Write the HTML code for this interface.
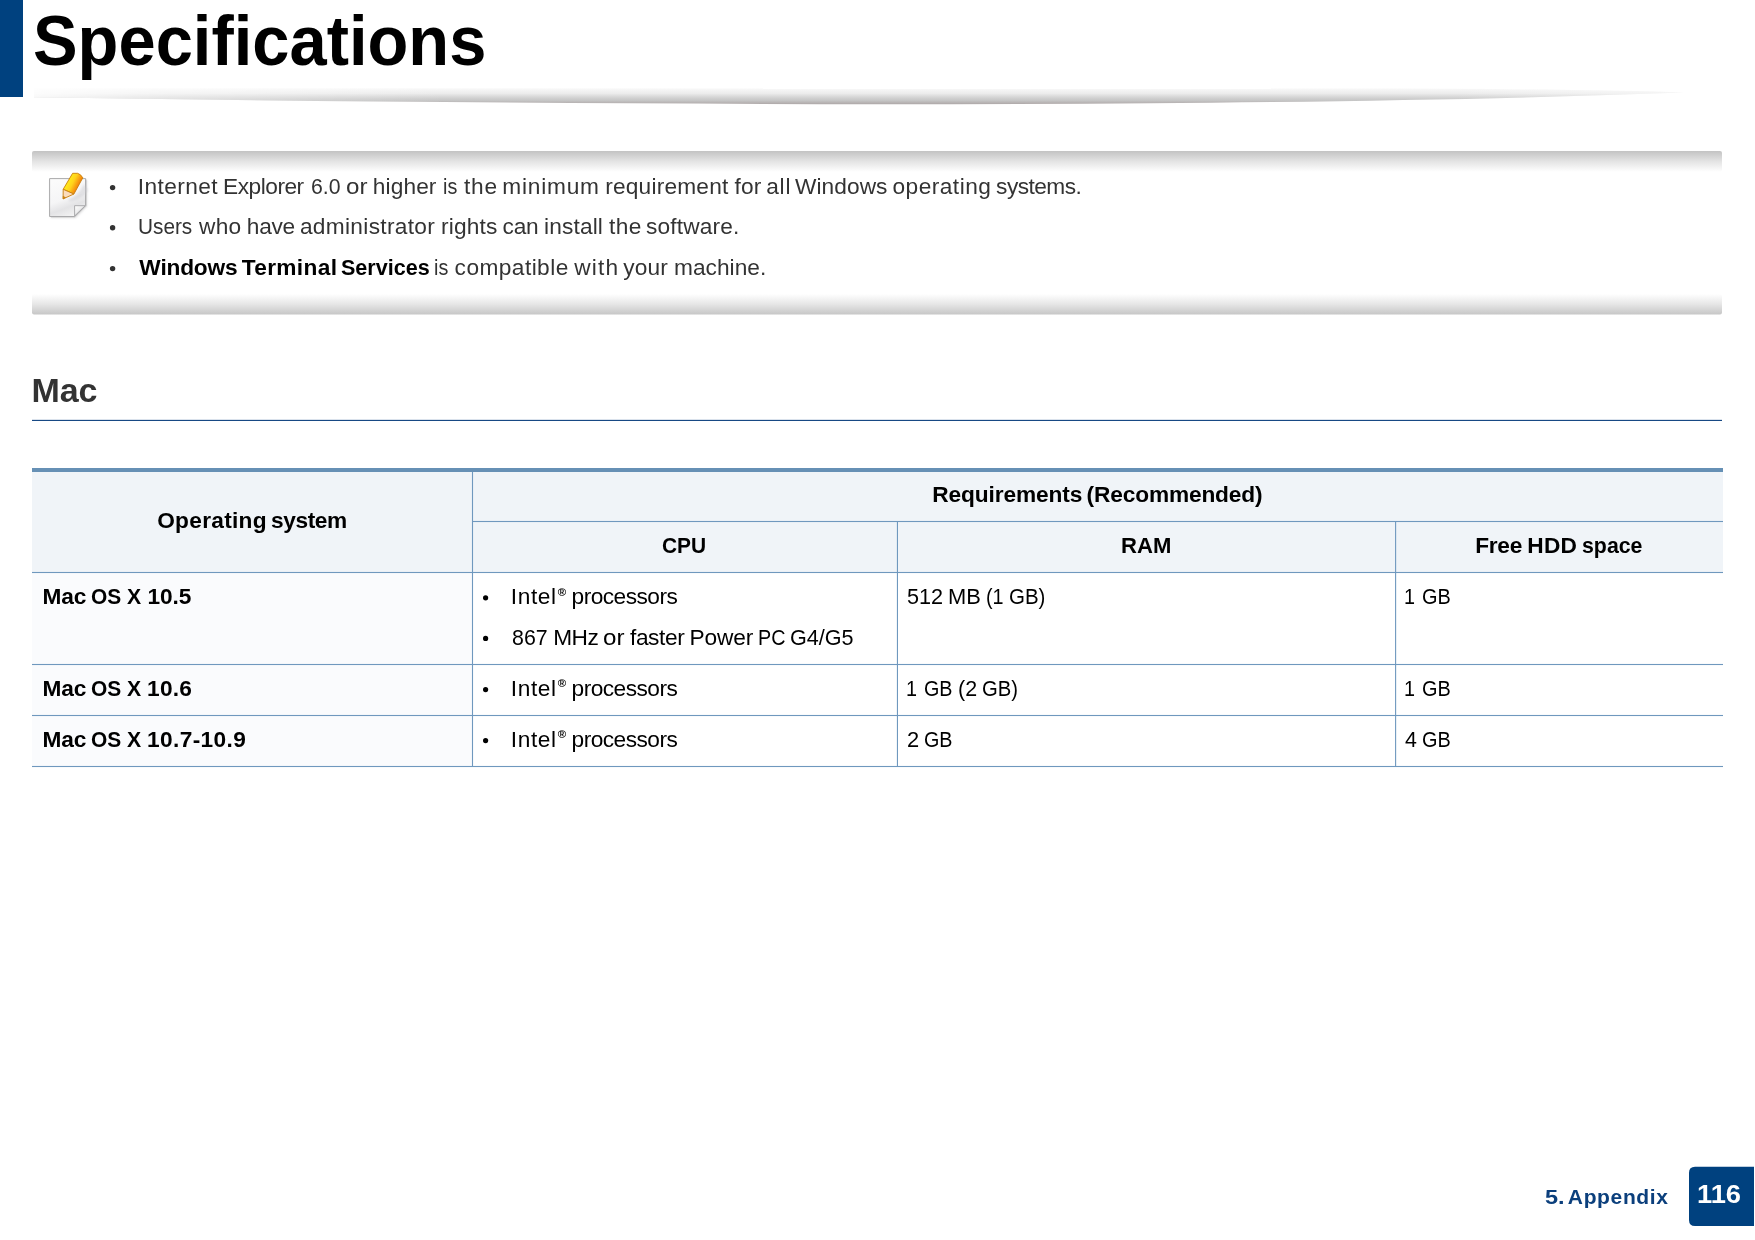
<!DOCTYPE html>
<html lang="en">
<head>
<meta charset="utf-8">
<title>Specifications</title>
<style>
html,body{margin:0;padding:0;background:#fff}
body{width:1755px;height:1240px;position:relative;overflow:hidden;font-family:"Liberation Sans",sans-serif}
#bg{position:absolute;left:0;top:0;width:1755px;height:1240px;display:block}
.t{position:absolute;left:0;white-space:nowrap;line-height:1;margin:0;padding:0}
.t span,.t b{position:absolute;top:0;transform-origin:0 0}
.t b{color:#000;font-weight:700}
.t .r{position:relative;top:-.75em}
.r{font-size:.5em;font-weight:700;letter-spacing:0;margin-left:1px}
h1,h2,ul,li{margin:0;padding:0;list-style:none}
</style>
</head>
<body>
<svg id="bg" width="1755" height="1240" viewBox="0 0 1755 1240">
<defs>
<linearGradient id="gsh" gradientUnits="userSpaceOnUse" x1="0" y1="87.7" x2="0" y2="103.8">
<stop offset="0" stop-color="#ffffff"/><stop offset=".07" stop-color="#f8f8f8"/><stop offset=".36" stop-color="#ececec"/><stop offset=".5" stop-color="#dedede"/><stop offset=".65" stop-color="#d0d0d0"/><stop offset=".79" stop-color="#c6c6c6"/><stop offset=".93" stop-color="#b8b4b4"/><stop offset="1" stop-color="#b0aaaa"/>
</linearGradient>
<linearGradient id="gfade" gradientUnits="userSpaceOnUse" x1="33" y1="0" x2="1685" y2="0">
<stop offset="0" stop-color="#fff" stop-opacity=".85"/><stop offset=".08" stop-color="#fff" stop-opacity=".45"/><stop offset=".25" stop-color="#fff" stop-opacity="0"/><stop offset=".86" stop-color="#fff" stop-opacity="0"/><stop offset="1" stop-color="#fff" stop-opacity=".45"/>
</linearGradient>
<linearGradient id="gtop" x1="0" y1="0" x2="0" y2="1">
<stop offset="0" stop-color="#c3c3c3"/><stop offset=".5" stop-color="#e4e4e4"/><stop offset="1" stop-color="#ffffff"/>
</linearGradient>
<linearGradient id="gbot" x1="0" y1="0" x2="0" y2="1">
<stop offset="0" stop-color="#ffffff"/><stop offset=".5" stop-color="#e6e6e6"/><stop offset="1" stop-color="#c6c6c6"/>
</linearGradient>
</defs>
<!-- title bar -->
<rect x="0" y="0" width="23" height="97" fill="#00417f"/>
<path id="sh" d="M34,88 L1400,88.3 Q1600,89.5 1683,92.6 Q1380,104 880,104.3 Q400,103 34,97.3 Z" fill="url(#gsh)"/>
<path d="M34,88 L1400,88.3 Q1600,89.5 1683,92.6 Q1380,104 880,104.3 Q400,103 34,97.3 Z" fill="url(#gfade)"/>
<!-- note box -->
<rect x="32" y="151" width="1690" height="21" rx="2" fill="url(#gtop)"/>
<rect x="32" y="294" width="1690" height="20.6" rx="2" fill="url(#gbot)"/>
<g id="noteicon">
<defs>
<linearGradient id="gpap" gradientUnits="userSpaceOnUse" x1="58" y1="180" x2="72" y2="218"><stop offset="0" stop-color="#fbfbfb"/><stop offset=".5" stop-color="#f5f5f6"/><stop offset=".72" stop-color="#e3e3e5"/><stop offset=".86" stop-color="#ececed"/><stop offset="1" stop-color="#f6f6f6"/></linearGradient>
<linearGradient id="gpen" gradientUnits="userSpaceOnUse" x1="67.5" y1="181" x2="78.5" y2="186.5"><stop offset="0" stop-color="#ffec1a"/><stop offset=".45" stop-color="#ffd21c"/><stop offset="1" stop-color="#f47d0a"/></linearGradient>
<linearGradient id="gfold" x1="0" y1="0" x2="1" y2="1"><stop offset="0" stop-color="#ffffff"/><stop offset=".5" stop-color="#e9e9ea"/></linearGradient>
<filter id="fblur" x="-30%" y="-30%" width="160%" height="160%"><feGaussianBlur stdDeviation="1.1"/></filter>
</defs>
<path d="M50.6,179.8 H87 V206.4 L75.6,217.9 H50.6 Z" fill="#b9b9bb" opacity=".45" filter="url(#fblur)"/>
<path d="M51,179.6 H86.6 V205.9 L74.9,217.5 H51 Z" fill="#c4c4c6" opacity=".8"/>
<path d="M49.6,178.6 H85.6 V205.4 L74.3,216.5 H49.6 Z" fill="url(#gpap)" stroke="#a9a9ab" stroke-width="1"/>
<path d="M74.6,205.7 H85.2 L74.6,216 Z" fill="url(#gfold)" stroke="#a4a4a6" stroke-width=".9" stroke-linejoin="round"/>
<path d="M68,199.5 Q78,197 84,184 L88,190 Q84,199 70,201.5 Z" fill="#c9c9cf" opacity=".45" filter="url(#fblur)"/>
<path d="M72.6,173.3 H77.6 Q80.8,174.2 82.8,177.8 L73.9,194 L63.2,189.3 Z" fill="url(#gpen)" stroke="#c77d0a" stroke-width=".9" stroke-linejoin="round"/>
<path d="M63.2,189.3 L73.9,194 L63.1,198.9 Z" fill="#fbdcbc" stroke="#c77d0a" stroke-width=".9" stroke-linejoin="round"/>
<path d="M63.1,196.2 L65.6,197.6 L63.1,198.9 Z" fill="#c8821a" stroke="#c77d0a" stroke-width=".5" stroke-linejoin="round"/>
</g>

<!-- section rule -->
<rect x="32" y="419.85" width="1690" height="1.1" fill="#0c417e"/>
<!-- table -->
<rect x="32" y="470" width="1691" height="102.3" fill="#f0f4f8"/>
<rect x="32" y="572.5" width="440.5" height="194" fill="#fafbfd"/>
<rect x="32" y="468" width="1691" height="4" fill="#6690b5"/>
<g fill="#6f98be">
<rect x="472" y="520.95" width="1251" height="1.1"/>
<rect x="32" y="571.95" width="1691" height="1.1"/>
<rect x="32" y="663.95" width="1691" height="1.1"/>
<rect x="32" y="714.95" width="1691" height="1.1"/>
<rect x="32" y="765.95" width="1691" height="1.1"/>
<rect x="471.95" y="472" width="1.1" height="295"/>
<rect x="896.9" y="521" width="1.1" height="246"/>
<rect x="1395.05" y="521" width="1.1" height="246"/>
</g>
<!-- footer badge -->
<path d="M1695,1166.8 H1754 V1226 H1695 Q1689,1226 1689,1220 V1172.8 Q1689,1166.8 1695,1166.8 Z" fill="#00417f"/>
</svg>
<svg style="position:absolute;left:0;top:0" width="1755" height="1240" viewBox="0 0 1755 1240"><circle cx="112.6" cy="187.6" r="2.7" fill="#333"/><circle cx="112.6" cy="227.7" r="2.7" fill="#333"/><circle cx="112.6" cy="268.6" r="2.7" fill="#333"/><circle cx="485.6" cy="597.8" r="2.6" fill="#000"/><circle cx="485.6" cy="638.4" r="2.6" fill="#000"/><circle cx="485.6" cy="689.6" r="2.6" fill="#000"/><circle cx="485.6" cy="740.6" r="2.6" fill="#000"/></svg>
<div id="txt" style="position:absolute;left:0;top:0;width:1755px;height:1240px;will-change:transform">
<header><h1 class="t" style="top:6.00px;font-size:70.5px;font-weight:700;color:#000"><span style="left:32.90px;transform:scaleX(0.9486)">Specifications</span></h1></header>
<ul class="note">
<li class="t" style="top:175.00px;font-size:22.7px;font-weight:400;color:#333"><span style="left:137.85px;letter-spacing:0.41px">Internet</span> <span style="left:223.10px;letter-spacing:-0.49px">Explorer</span> <span style="left:311.36px;transform:scaleX(0.9367)">6.0</span> <span style="left:346.34px;transform:scaleX(1.0632)">or</span> <span style="left:372.85px;letter-spacing:0.1px">higher</span> <span style="left:443.31px;transform:scaleX(0.8700)">is</span> <span style="left:463.95px;letter-spacing:0.85px">the</span> <span style="left:502.25px;letter-spacing:0.78px">minimum</span> <span style="left:605.20px;letter-spacing:0.2px">requirement</span> <span style="left:734.45px;letter-spacing:0.15px">for</span> <span style="left:766.25px;letter-spacing:0.75px">all</span> <span style="left:794.95px;letter-spacing:0.08px">Windows</span> <span style="left:892.55px;letter-spacing:0.46px">operating</span> <span style="left:996.10px;letter-spacing:-0.54px">systems.</span></li>
<li class="t" style="top:215.00px;font-size:22.7px;font-weight:400;color:#333"><span style="left:138.17px;transform:scaleX(0.9158)">Users</span> <span style="left:199.05px;letter-spacing:0.25px">who</span> <span style="left:246.80px;letter-spacing:-0.27px">have</span> <span style="left:299.95px;letter-spacing:0.31px">administrator</span> <span style="left:440.90px;letter-spacing:0.2px">rights</span> <span style="left:502.55px;letter-spacing:-0.25px">can</span> <span style="left:544.10px;letter-spacing:0.13px">install</span> <span style="left:608.95px;letter-spacing:0.45px">the</span> <span style="left:646.05px;letter-spacing:0.14px">software.</span></li>
<li class="t" style="top:255.60px;font-size:22.7px;font-weight:400;color:#333"><b style="left:139.35px;letter-spacing:-0.18px">Windows</b> <b style="left:241.75px;letter-spacing:0.33px">Terminal</b> <b style="left:341.45px;transform:scaleX(0.9495)">Services</b> <span style="left:433.71px;transform:scaleX(0.8700)">is</span> <span style="left:454.60px;letter-spacing:0.44px">compatible</span> <span style="left:574.25px;letter-spacing:1.17px">with</span> <span style="left:623.25px;letter-spacing:0.1px">your</span> <span style="left:674.00px;letter-spacing:0.03px">machine.</span></li>
</ul>
<h2 class="t" style="top:372.90px;font-size:34px;font-weight:700;color:#333"><span style="left:31.55px;letter-spacing:-0.15px">Mac</span></h2>
<div role="table">
<div role="row"><div class="t" role="columnheader" style="top:508.90px;font-size:22.7px;font-weight:700;color:#000"><span style="left:157.15px;letter-spacing:0.29px">Operating</span> <span style="left:271.05px;letter-spacing:-0.42px">system</span></div><div class="t" role="columnheader" style="top:482.70px;font-size:22.7px;font-weight:700;color:#000"><span style="left:932.30px;letter-spacing:-0.11px">Requirements</span> <span style="left:1086.60px;letter-spacing:-0.15px">(Recommended)</span></div></div>
<div role="row"><div class="t" role="columnheader" style="top:533.90px;font-size:22.7px;font-weight:700;color:#000"><span style="left:661.88px;transform:scaleX(0.9217)">CPU</span></div><div class="t" role="columnheader" style="top:533.90px;font-size:22.7px;font-weight:700;color:#000"><span style="left:1120.93px;transform:scaleX(0.9735)">RAM</span></div><div class="t" role="columnheader" style="top:533.80px;font-size:22.7px;font-weight:700;color:#000"><span style="left:1475.25px;letter-spacing:-0.3px">Free</span> <span style="left:1527.35px;letter-spacing:0.15px">HDD</span> <span style="left:1581.56px;transform:scaleX(0.9397)">space</span></div></div>
<div role="row"><div class="t" role="rowheader" style="top:585.00px;font-size:22.7px;font-weight:700;color:#000"><span style="left:42.45px;letter-spacing:-0.15px">Mac</span> <span style="left:90.88px;transform:scaleX(0.9226)">OS</span> <span style="left:126.70px;transform:scaleX(0.9333)">X</span> <span style="left:147.50px;letter-spacing:-0.07px">10.5</span></div><div role="cell"><div class="t" style="top:585.00px;font-size:22.7px;font-weight:400;color:#000"><span style="left:510.80px;letter-spacing:0.6px">Intel<span class="r">®</span></span> <span style="left:571.55px;letter-spacing:-0.52px">processors</span></div><div class="t" style="top:625.60px;font-size:22.7px;font-weight:400;color:#000"><span style="left:511.66px;transform:scaleX(0.9417)">867</span> <span style="left:553.30px;letter-spacing:-0.6px">MHz</span> <span style="left:603.34px;transform:scaleX(1.0632)">or</span> <span style="left:630.00px;letter-spacing:-0.4px">faster</span> <span style="left:689.60px;letter-spacing:-0.15px">Power</span> <span style="left:758.00px;transform:scaleX(0.8700)">PC</span> <span style="left:790.25px;transform:scaleX(0.9508)">G4/G5</span></div></div><div class="t" role="cell" style="top:585.00px;font-size:22.7px;font-weight:400;color:#000"><span style="left:907.05px;transform:scaleX(0.9528)">512</span> <span style="left:947.97px;transform:scaleX(0.9645)">MB</span> <span style="left:986.35px;transform:scaleX(0.8700)">(1</span> <span style="left:1009.40px;transform:scaleX(0.9026)">GB)</span></div><div class="t" role="cell" style="top:585.00px;font-size:22.7px;font-weight:400;color:#000"><span style="left:1404.06px;transform:scaleX(0.8700)">1</span> <span style="left:1421.82px;transform:scaleX(0.8774)">GB</span></div></div>
<div role="row"><div class="t" role="rowheader" style="top:676.50px;font-size:22.7px;font-weight:700;color:#000"><span style="left:42.45px;letter-spacing:-0.15px">Mac</span> <span style="left:90.88px;transform:scaleX(0.9226)">OS</span> <span style="left:126.70px;transform:scaleX(0.9333)">X</span> <span style="left:147.00px;letter-spacing:0.27px">10.6</span></div><div class="t" role="cell" style="top:676.50px;font-size:22.7px;font-weight:400;color:#000"><span style="left:510.80px;letter-spacing:0.6px">Intel<span class="r">®</span></span> <span style="left:571.55px;letter-spacing:-0.52px">processors</span></div><div class="t" role="cell" style="top:676.50px;font-size:22.7px;font-weight:400;color:#000"><span style="left:906.21px;transform:scaleX(0.8700)">1</span> <span style="left:923.85px;transform:scaleX(0.8700)">GB</span> <span style="left:957.86px;transform:scaleX(0.9444)">(2</span> <span style="left:981.91px;transform:scaleX(0.8921)">GB)</span></div><div class="t" role="cell" style="top:676.50px;font-size:22.7px;font-weight:400;color:#000"><span style="left:1404.06px;transform:scaleX(0.8700)">1</span> <span style="left:1421.82px;transform:scaleX(0.8774)">GB</span></div></div>
<div role="row"><div class="t" role="rowheader" style="top:727.50px;font-size:22.7px;font-weight:700;color:#000"><span style="left:42.45px;letter-spacing:-0.15px">Mac</span> <span style="left:90.88px;transform:scaleX(0.9226)">OS</span> <span style="left:126.70px;transform:scaleX(0.9333)">X</span> <span style="left:147.05px;letter-spacing:0.36px">10.7-10.9</span></div><div class="t" role="cell" style="top:727.50px;font-size:22.7px;font-weight:400;color:#000"><span style="left:510.80px;letter-spacing:0.6px">Intel<span class="r">®</span></span> <span style="left:571.55px;letter-spacing:-0.52px">processors</span></div><div class="t" role="cell" style="top:727.50px;font-size:22.7px;font-weight:400;color:#000"><span style="left:907.04px;transform:scaleX(0.9636)">2</span> <span style="left:924.29px;transform:scaleX(0.8700)">GB</span></div><div class="t" role="cell" style="top:727.50px;font-size:22.7px;font-weight:400;color:#000"><span style="left:1405.00px;transform:scaleX(0.9417)">4</span> <span style="left:1421.82px;transform:scaleX(0.8774)">GB</span></div></div>
</div>
<footer><div class="t" style="top:1185.90px;font-size:21px;font-weight:700;color:#0b3f7c"><span style="left:1545.23px;transform:scaleX(1.1200)">5.</span> <span style="left:1567.85px;letter-spacing:0.64px">Appendix</span></div><div class="t" style="top:1181.60px;font-size:25px;font-weight:700;color:#fff"><span style="left:1696.91px;transform:scaleX(1.0923)">116</span></div></footer>
</div>
</body>
</html>
